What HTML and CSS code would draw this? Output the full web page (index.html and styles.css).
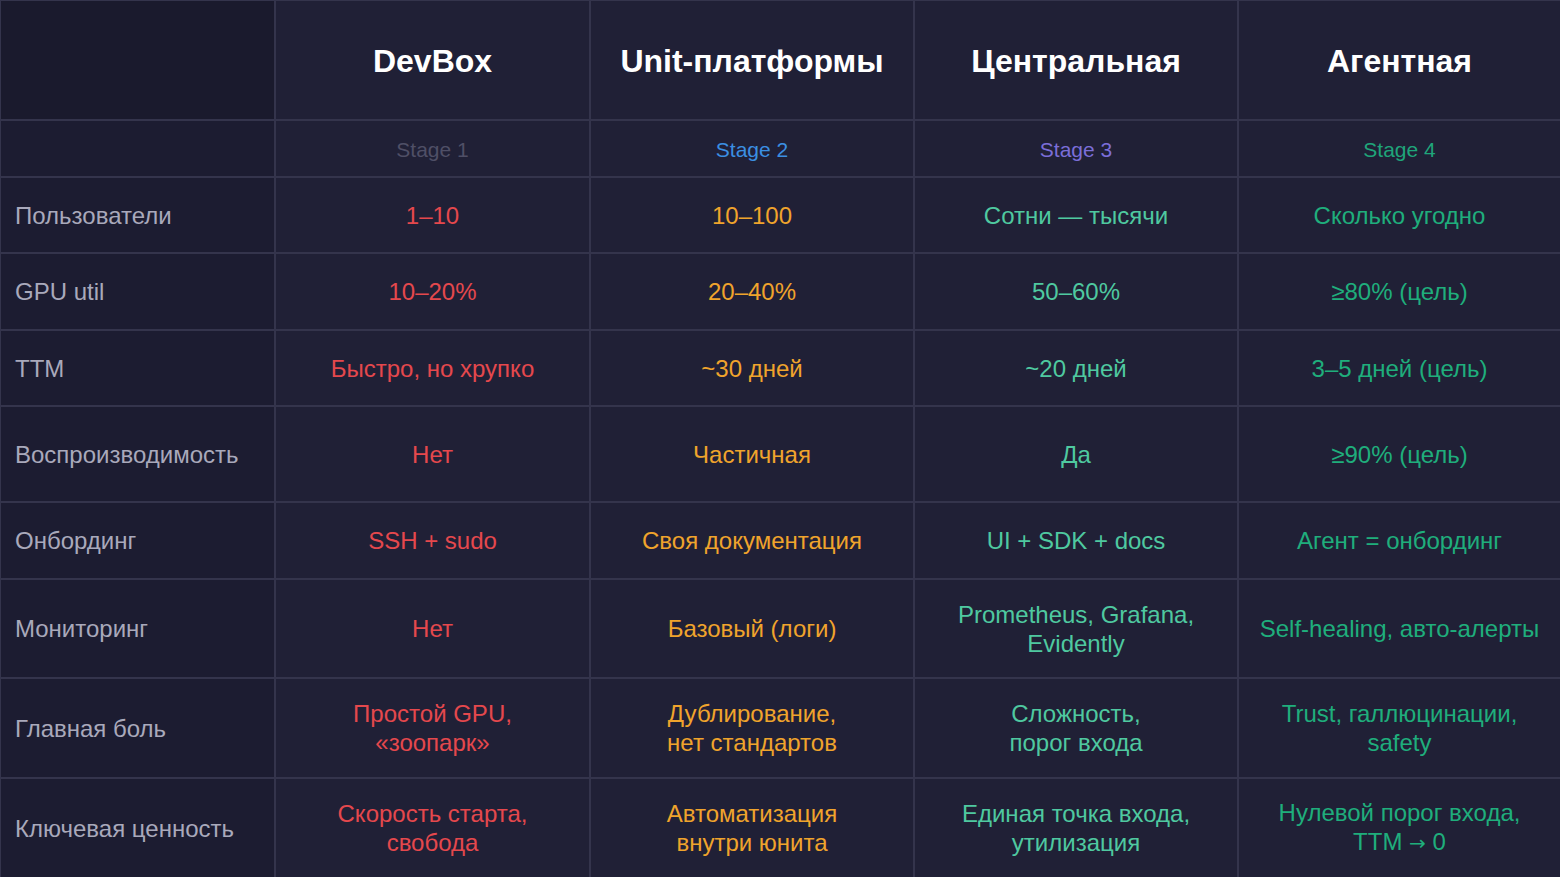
FILE: index.html
```html
<!DOCTYPE html>
<html lang="ru">
<head>
<meta charset="utf-8">
<title>Stages</title>
<link rel="stylesheet" href="styles.css">
</head>
<body>
<div class="table">
  <div class="cell corner"></div>
  <div class="cell head">DevBox</div>
  <div class="cell head">Unit-платформы</div>
  <div class="cell head">Центральная</div>
  <div class="cell head">Агентная</div>

  <div class="cell label"></div>
  <div class="cell stage s1">Stage 1</div>
  <div class="cell stage s2">Stage 2</div>
  <div class="cell stage s3">Stage 3</div>
  <div class="cell stage s4">Stage 4</div>

  <div class="cell label">Пользователи</div>
  <div class="cell c1">1–10</div>
  <div class="cell c2">10–100</div>
  <div class="cell c3">Сотни — тысячи</div>
  <div class="cell c4">Сколько угодно</div>

  <div class="cell label">GPU util</div>
  <div class="cell c1">10–20%</div>
  <div class="cell c2">20–40%</div>
  <div class="cell c3">50–60%</div>
  <div class="cell c4">≥80% (цель)</div>

  <div class="cell label">TTM</div>
  <div class="cell c1">Быстро, но хрупко</div>
  <div class="cell c2">~30 дней</div>
  <div class="cell c3">~20 дней</div>
  <div class="cell c4">3–5 дней (цель)</div>

  <div class="cell label">Воспроизводимость</div>
  <div class="cell c1">Нет</div>
  <div class="cell c2">Частичная</div>
  <div class="cell c3">Да</div>
  <div class="cell c4">≥90% (цель)</div>

  <div class="cell label">Онбординг</div>
  <div class="cell c1">SSH + sudo</div>
  <div class="cell c2">Своя документация</div>
  <div class="cell c3">UI + SDK + docs</div>
  <div class="cell c4">Агент = онбординг</div>

  <div class="cell label">Мониторинг</div>
  <div class="cell c1">Нет</div>
  <div class="cell c2">Базовый (логи)</div>
  <div class="cell c3">Prometheus, Grafana,<br>Evidently</div>
  <div class="cell c4">Self-healing, авто-алерты</div>

  <div class="cell label">Главная боль</div>
  <div class="cell c1">Простой GPU,<br>«зоопарк»</div>
  <div class="cell c2">Дублирование,<br>нет стандартов</div>
  <div class="cell c3">Сложность,<br>порог входа</div>
  <div class="cell c4">Trust, галлюцинации,<br>safety</div>

  <div class="cell label">Ключевая ценность</div>
  <div class="cell c1">Скорость старта,<br>свобода</div>
  <div class="cell c2">Автоматизация<br>внутри юнита</div>
  <div class="cell c3">Единая точка входа,<br>утилизация</div>
  <div class="cell c4"><div>Нулевой порог входа,<br>TTM <span class="arrow">→</span> 0</div></div>
</div>
</body>
</html>
```

FILE: styles.css
```css
html, body {
  margin: 0;
  padding: 0;
  width: 1560px;
  height: 877px;
  overflow: hidden;
  background: #1e1e33;
}

.table {
  display: grid;
  grid-template-columns: 273px 313px 322px 322px 1fr;
  grid-template-rows: 118px 55px 74px 75px 74px 94px 75px 97px 98px 1fr;
  gap: 2px;
  padding: 1px 0 0 1px;
  width: 1560px;
  height: 877px;
  box-sizing: border-box;
  background: #34344c;
  font-family: "Liberation Sans", Arial, sans-serif;
  font-size: 24px;
  line-height: 29px;
}

.cell {
  background: #202036;
  display: flex;
  align-items: center;
  justify-content: center;
  text-align: center;
}

.corner {
  background: #1a1a2d;
}

.label {
  background: #1c1c31;
  justify-content: flex-start;
  text-align: left;
  padding-left: 14px;
  color: #a9a9bb;
}

.head {
  color: #ffffff;
  font-weight: bold;
  font-size: 32px;
  padding-top: 2px;
}

.stage {
  font-size: 21px;
  padding-top: 1px;
}

.arrow {
  font-family: "DejaVu Sans", sans-serif;
  font-size: 20px;
}

.s1 { color: #4f4f66; }
.s2 { color: #3b8fe2; }
.s3 { color: #7b6ed8; }
.s4 { color: #1fa57a; }

.c1 { color: #e5484d; }
.c2 { color: #f0a42c; }
.c3 { color: #4fc9a0; }
.c4 { color: #1fae7c; }
```
